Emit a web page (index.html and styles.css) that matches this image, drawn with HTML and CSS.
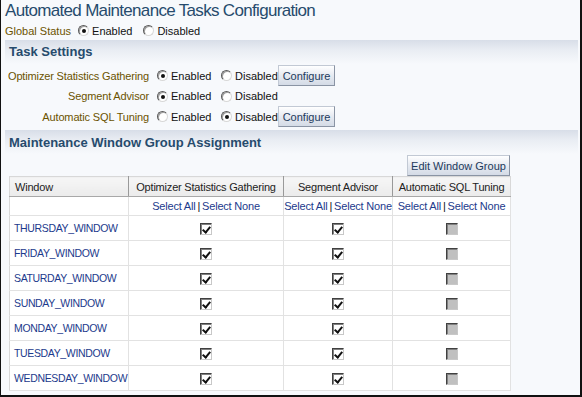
FILE: index.html
```html
<!DOCTYPE html>
<html>
<head>
<meta charset="utf-8">
<link rel="stylesheet" href="styles.css">
</head>
<body>
<div class="frame">
  <h1 class="title">Automated Maintenance Tasks Configuration</h1>
  <div class="global">
    <span class="lbl">Global Status</span>
    <span class="opt"><span class="radio on"></span>Enabled</span>
    <span class="opt"><span class="radio"></span>Disabled</span>
  </div>

  <section class="band">
    <h2 class="band-title">Task Settings</h2>
    <div class="task-grid">
      <div class="task-lbl">Optimizer Statistics Gathering</div>
      <div class="opts">
        <span class="opt o1"><span class="radio on"></span>Enabled</span>
        <span class="opt o2"><span class="radio"></span>Disabled</span>
        <button class="btn cfg">Configure</button>
      </div>
      <div class="task-lbl">Segment Advisor</div>
      <div class="opts">
        <span class="opt o1"><span class="radio on"></span>Enabled</span>
        <span class="opt o2"><span class="radio"></span>Disabled</span>
      </div>
      <div class="task-lbl">Automatic SQL Tuning</div>
      <div class="opts">
        <span class="opt o1"><span class="radio"></span>Enabled</span>
        <span class="opt o2"><span class="radio on"></span>Disabled</span>
        <button class="btn cfg">Configure</button>
      </div>
    </div>
  </section>

  <section class="band band2">
    <h2 class="band-title">Maintenance Window Group Assignment</h2>
    <div class="tablewrap">
      <div class="tools"><button class="btn edit">Edit Window Group</button></div>
      <table class="grid">
        <colgroup>
          <col class="c1"><col class="c2"><col class="c3"><col class="c4">
        </colgroup>
        <thead>
          <tr>
            <th class="left">Window</th>
            <th>Optimizer Statistics Gathering</th>
            <th>Segment Advisor</th>
            <th>Automatic SQL Tuning</th>
          </tr>
        </thead>
        <tbody>
          <tr class="sel">
            <td></td>
            <td><a>Select All</a><span class="sep">|</span><a>Select None</a></td>
            <td><a>Select All</a><span class="sep">|</span><a>Select None</a></td>
            <td><a>Select All</a><span class="sep">|</span><a>Select None</a></td>
          </tr>
          <tr><td class="win"><a>THURSDAY_WINDOW</a></td><td><span class="cb on"></span></td><td><span class="cb on"></span></td><td><span class="cb off"></span></td></tr>
          <tr><td class="win"><a>FRIDAY_WINDOW</a></td><td><span class="cb on"></span></td><td><span class="cb on"></span></td><td><span class="cb off"></span></td></tr>
          <tr><td class="win"><a>SATURDAY_WINDOW</a></td><td><span class="cb on"></span></td><td><span class="cb on"></span></td><td><span class="cb off"></span></td></tr>
          <tr><td class="win"><a>SUNDAY_WINDOW</a></td><td><span class="cb on"></span></td><td><span class="cb on"></span></td><td><span class="cb off"></span></td></tr>
          <tr><td class="win"><a>MONDAY_WINDOW</a></td><td><span class="cb on"></span></td><td><span class="cb on"></span></td><td><span class="cb off"></span></td></tr>
          <tr><td class="win"><a>TUESDAY_WINDOW</a></td><td><span class="cb on"></span></td><td><span class="cb on"></span></td><td><span class="cb off"></span></td></tr>
          <tr><td class="win"><a>WEDNESDAY_WINDOW</a></td><td><span class="cb on"></span></td><td><span class="cb on"></span></td><td><span class="cb off"></span></td></tr>
        </tbody>
      </table>
    </div>
  </section>
</div>
</body>
</html>
```

FILE: styles.css
```css
html, body {
  margin: 0;
  padding: 0;
  background: #f7f9fc;
}
.frame {
  box-sizing: border-box;
  width: 582px;
  height: 397px;
  background: #f7f9fc;
  border-left: 1px solid #111;
  border-right: 2px solid #111;
  border-bottom: 2px solid #111;
  font-family: "Liberation Sans", Arial, sans-serif;
  font-size: 11px;
  color: #111;
  overflow: hidden;
}
.title {
  margin: 0;
  padding-left: 4px;
  font-size: 17px;
  font-weight: normal;
  line-height: 21px;
  height: 21px;
  color: #264b6d;
  letter-spacing: -0.68px;
}
.global {
  display: flex;
  align-items: center;
  height: 19px;
  padding-left: 4px;
}
.lbl, .task-lbl {
  color: #6b5300;
}
.global .lbl {
  margin-right: 7px;
}
.opt {
  display: inline-flex;
  align-items: center;
  white-space: nowrap;
}
.global .opt {
  margin-right: 11px;
}
.radio {
  position: relative;
  box-sizing: border-box;
  display: inline-block;
  width: 11px;
  height: 11px;
  border-radius: 50%;
  border: 1px solid;
  border-color: #5a5a5a #d8d8d8 #d8d8d8 #5a5a5a;
  background: #fff;
  margin-right: 3px;
  box-shadow: inset 1px 1px 0 #a0a0a0;
}
.radio.on::after {
  content: "";
  position: absolute;
  left: 3px;
  top: 3px;
  width: 4px;
  height: 4px;
  border-radius: 50%;
  background: #111;
}
.band {
  margin: 0 2px 0 4px;
  background: linear-gradient(#d8dee8 0px, #e9edf3 10px, #f7f9fc 24px);
}
.band-title {
  margin: 0;
  padding-left: 4px;
  height: 24px;
  line-height: 24px;
  font-size: 13px;
  font-weight: bold;
  color: #264b6d;
}
.task-grid {
  display: grid;
  grid-template-columns: 144px auto;
  grid-auto-rows: 21px 20px 21px;
  column-gap: 8px;
  align-items: center;
  padding-top: 1px;
  height: 65px;
  box-sizing: border-box;
}
.task-lbl {
  text-align: right;
  white-space: nowrap;
  letter-spacing: -0.15px;
}
.opts {
  display: flex;
  align-items: center;
}
.opt.o1 {
  width: 64px;
}
.opt.o2 {
  width: 57px;
}
.btn {
  font-family: "Liberation Sans", Arial, sans-serif;
  font-size: 11px;
  color: #1d3a5c;
  background: linear-gradient(#ffffff, #e6eaf1 50%, #d4dbe6);
  border: 1px solid;
  border-color: #c2c9d4 #8a94a4 #8a94a4 #c2c9d4;
  padding: 0 3px;
  height: 21px;
  margin: 0;
  white-space: nowrap;
}
.btn.cfg {
  width: 57px;
}
.band2 {
  margin-top: 1px;
}
.band2 .band-title {
  height: 25px;
  line-height: 25px;
}
.tablewrap {
  margin-left: 4px;
  width: 501px;
}
.tools {
  display: flex;
  justify-content: flex-end;
}
.btn.edit {
  width: 103px;
  height: 21px;
}
.grid {
  border-collapse: collapse;
  width: 501px;
  background: #fff;
  table-layout: fixed;
  letter-spacing: -0.2px;
}
.grid th, .grid td {
  padding: 0;
  text-align: center;
  white-space: nowrap;
  border: 1px solid #e2e2e2;
}
.grid th {
  height: 19px;
  background: linear-gradient(#f6f6f6, #ebebeb);
  font-weight: normal;
  color: #222;
  border-color: #d8d8d8 #999 #a8a8a8 #999;
}
.grid th.left {
  text-align: left;
  padding-left: 5px;
}
.grid th:first-child, .grid td:first-child {
  border-left-color: #d8d8d8;
}
.grid th:last-child {
  border-right-color: #d8d8d8;
}
.c1 { width: 119px; }
.c2 { width: 155px; }
.c3 { width: 109px; }
.c4 { width: 118px; }
.grid tr.sel td {
  height: 18px;
}
.grid td {
  height: 24px;
}
.grid a {
  color: #1c3a8c;
  text-decoration: none;
}
.sep {
  margin: 0 2px;
  color: #111;
}
.grid td.win {
  text-align: left;
  padding-left: 4px;
}
.grid td.win a {
  font-size: 10.5px;
  letter-spacing: -0.35px;
}
.cb {
  position: relative;
  display: inline-block;
  box-sizing: border-box;
  width: 12px;
  height: 12px;
  vertical-align: middle;
  border: 1px solid;
  border-color: #404040 #c8c8c8 #c8c8c8 #404040;
  box-shadow: inset 1px 1px 0 #808080;
}
.cb.on {
  background: #fff;
}
.cb.on::after {
  content: "";
  position: absolute;
  left: 3px;
  top: 1px;
  width: 3px;
  height: 6px;
  border-right: 2px solid #111;
  border-bottom: 2px solid #111;
  transform: rotate(40deg);
}
.cb.off {
  background: #c0c0c0;
}
```
